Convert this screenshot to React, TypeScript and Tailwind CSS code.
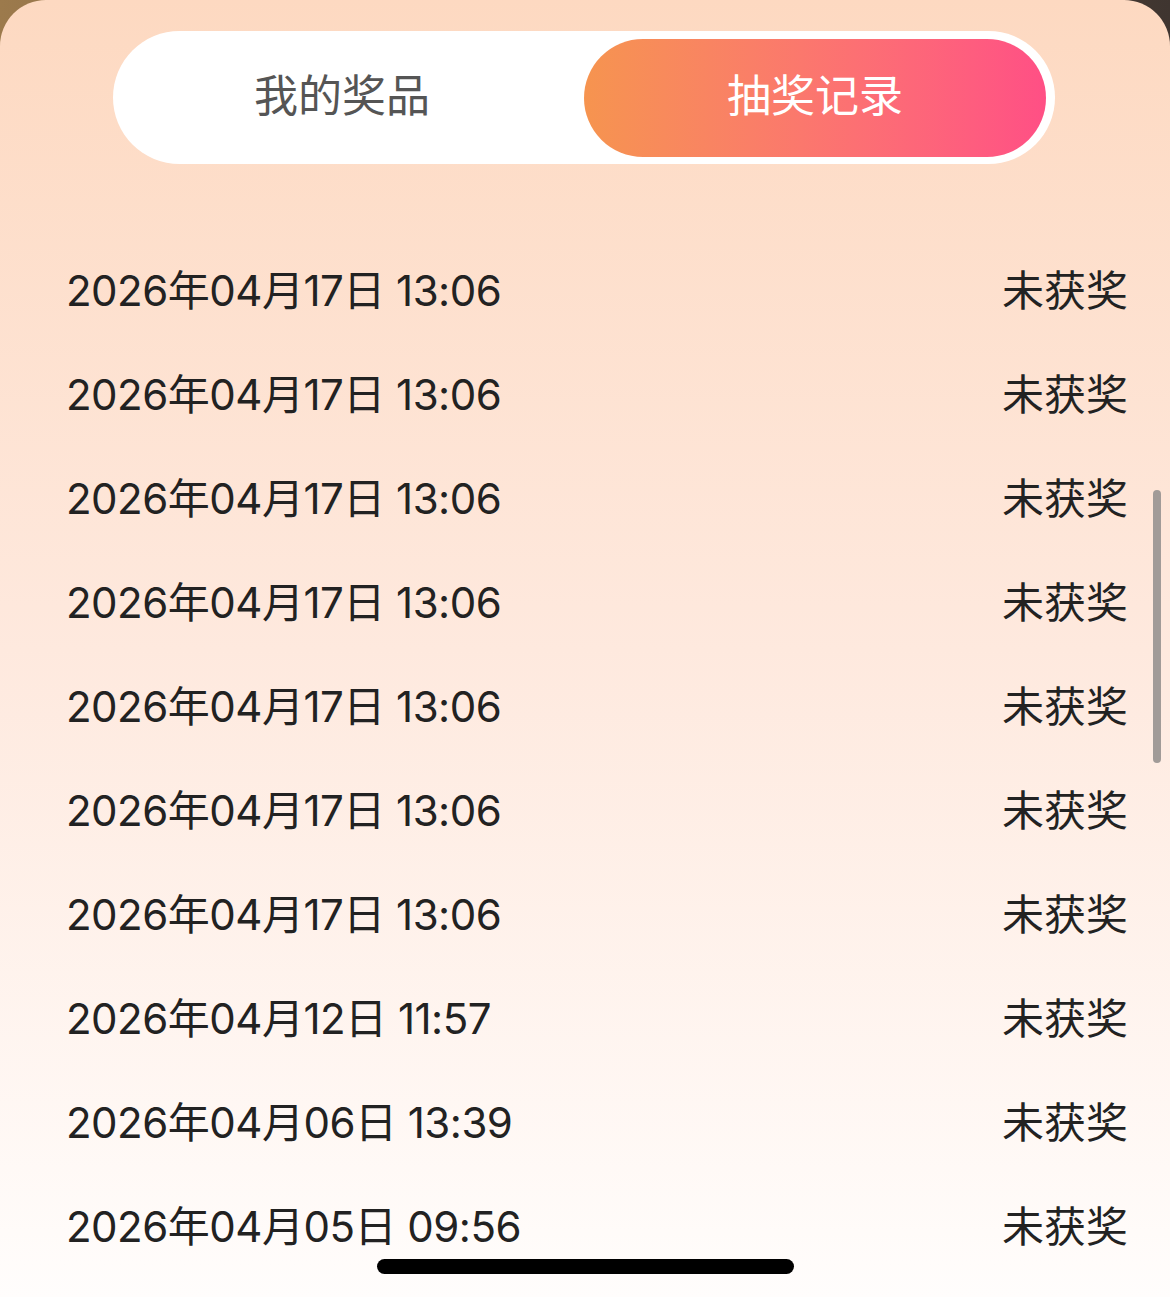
import React from "react";

const records = [
  "2026年04月17日 13:06",
  "2026年04月17日 13:06",
  "2026年04月17日 13:06",
  "2026年04月17日 13:06",
  "2026年04月17日 13:06",
  "2026年04月17日 13:06",
  "2026年04月17日 13:06",
  "2026年04月12日 11:57",
  "2026年04月06日 13:39",
  "2026年04月05日 09:56",
];

export default function App() {
  return (
    <div className="w-[1170px] h-[1297px] overflow-hidden bg-gradient-to-r from-[#9c7a4c] via-[#6e5540] to-[#3f3530]">
      <div
        className="relative h-full rounded-t-[46px] bg-gradient-to-b from-[#fdd9c1] via-[#fee9de] to-[#fffdfc] overflow-hidden"
        style={{ fontFamily: '"Inter", "Noto Sans CJK SC", sans-serif' }}
      >
        {/* Tabs */}
        <div className="pt-[31px] flex justify-center">
          <div className="ml-[-2px] w-[942px] h-[133px] bg-white rounded-full flex items-center p-[7px] pr-[9px]">
            <div className="flex-1 h-full flex items-center justify-center text-[44px] text-[#555555] pr-[20px] pb-[4px]">
              我的奖品
            </div>
            <div className="w-[462px] h-[118px] rounded-full bg-gradient-to-r from-[#f6944f] to-[#ff4f85] flex items-center justify-center text-[44px] text-white pb-[4px]">
              抽奖记录
            </div>
          </div>
        </div>

        {/* List */}
        <div className="mt-[74px] pl-[66px] pr-[42px]">
          {records.map((r, i) => (
            <div
              key={i}
              className="h-[104px] flex items-center justify-between text-[42px] text-[#222222]"
            >
              <span className="tracking-[-0.5px]">{r}</span>
              <span>未获奖</span>
            </div>
          ))}
        </div>

        {/* scrollbar */}
        <div className="absolute left-[1153px] top-[490px] w-[8px] h-[273px] rounded-full bg-[#a19b98]" />

        {/* home indicator */}
        <div className="absolute left-[377px] top-[1259px] w-[417px] h-[15px] rounded-full bg-black" />
      </div>
    </div>
  );
}
